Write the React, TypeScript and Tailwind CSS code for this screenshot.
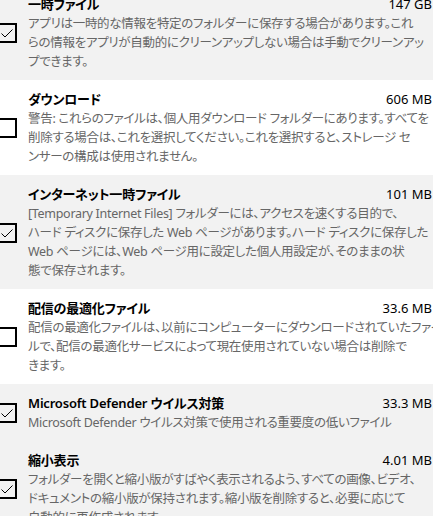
interface Item {
  title: string;
  size: string;
  checked: boolean;
  lines: string[];
}

const items: Item[] = [
  {
    title: "一時ファイル",
    size: "147 GB",
    checked: true,
    lines: [
      "アプリは一時的な情報を特定のフォルダーに保存する場合があります。これ",
      "らの情報をアプリが自動的にクリーンアップしない場合は手動でクリーンアッ",
      "プできます。",
    ],
  },
  {
    title: "ダウンロード",
    size: "606 MB",
    checked: false,
    lines: [
      "警告: これらのファイルは、個人用ダウンロード フォルダーにあります。すべてを",
      "削除する場合は、これを選択してください。これを選択すると、ストレージ セ",
      "ンサーの構成は使用されません。",
    ],
  },
  {
    title: "インターネット一時ファイル",
    size: "101 MB",
    checked: true,
    lines: [
      "[Temporary Internet Files] フォルダーには、アクセスを速くする目的で、",
      "ハード ディスクに保存した Web ページがあります。ハード ディスクに保存した",
      "Web ページには、Web ページ用に設定した個人用設定が、そのままの状",
      "態で保存されます。",
    ],
  },
  {
    title: "配信の最適化ファイル",
    size: "33.6 MB",
    checked: false,
    lines: [
      "配信の最適化ファイルは、以前にコンピューターにダウンロードされていたファイ",
      "ルで、配信の最適化サービスによって現在使用されていない場合は削除で",
      "きます。",
    ],
  },
  {
    title: "Microsoft Defender ウイルス対策",
    size: "33.3 MB",
    checked: true,
    lines: ["Microsoft Defender ウイルス対策で使用される重要度の低いファイル"],
  },
  {
    title: "縮小表示",
    size: "4.01 MB",
    checked: true,
    lines: [
      "フォルダーを開くと縮小版がすばやく表示されるよう、すべての画像、ビデオ、",
      "ドキュメントの縮小版が保持されます。縮小版を削除すると、必要に応じて",
      "自動的に再作成されます。",
    ],
  },
];

const Checkbox = ({ checked }: { checked: boolean }) => (
  <div className="w-5 h-5 shrink-0 -ml-[3px] border-2 border-black flex items-center justify-center">
    {checked && (
      <svg width="14" height="14" viewBox="0 0 14 14" fill="none">
        <path d="M1.5 7.5 L5 11 L12.5 3.5" stroke="#000" strokeWidth="1" />
      </svg>
    )}
  </div>
);

const Row = ({ item }: { item: Item }) => (
  <div
    className={`flex items-center pt-[10px] pb-[9px] ${
      item.checked ? "bg-[#f2f2f2]" : "bg-white"
    }`}
  >
    <Checkbox checked={item.checked} />
    <div className="flex-1 min-w-0 ml-[11px] pr-[1px]">
      <div className="flex items-baseline justify-between leading-[19px]">
        <span className="text-[13px] font-semibold tracking-[-0.2px] text-black">
          {item.title}
        </span>
        <span className="text-[13px] text-black">{item.size}</span>
      </div>
      <div className="text-[12.5px] leading-[19px] tracking-[-0.3px] text-[#666666]">
        {item.lines.map((line) => (
          <div key={line} className="whitespace-nowrap">
            {line}
          </div>
        ))}
      </div>
    </div>
  </div>
);

export default function App() {
  return (
    <div className="w-[433px] h-[516px] overflow-hidden bg-white [font-feature-settings:'palt'] font-['Noto_Sans','Noto_Sans_CJK_JP',sans-serif]">
      <div className="-mt-[15px]">
        {items.map((item) => (
          <Row key={item.title} item={item} />
        ))}
      </div>
    </div>
  );
}
